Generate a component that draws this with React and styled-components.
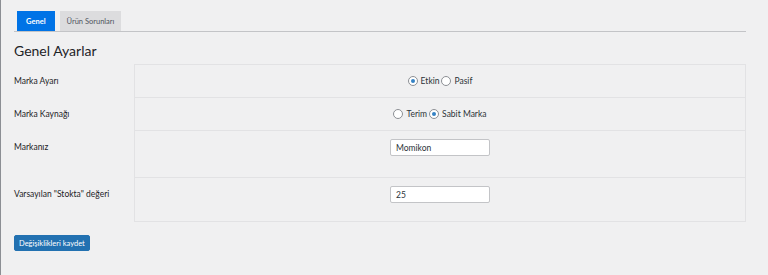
import { styled, createGlobalStyle } from "styled-components";

const Global = createGlobalStyle`
  html, body {
    margin: 0;
    padding: 0;
    background: #f0f0f1;
  }
  body {
    font-family: Lato, "Noto Sans", sans-serif;
    color: #1d2327;
  }
`;

const Page = styled.div`
  width: 768px;
  height: 275px;
  box-sizing: border-box;
  border-left: 1px solid #8c8f94;
  padding: 11px 22px 0 13px;
`;

const TabBar = styled.div`
  display: flex;
  gap: 5px;
  padding-left: 3px;
  border-bottom: 1px solid #c3c4c7;
`;

const Tab = styled.div`
  height: 19px;
  padding: 0 ${(p) => (p.$active ? 8 : 6)}px;
  display: flex;
  align-items: center;
  font-size: 7.5px;
  background: ${(p) => (p.$active ? "#0073e6" : "#dcdcde")};
  color: ${(p) => (p.$active ? "#fff" : "#50575e")};
  font-weight: ${(p) => (p.$active ? 700 : 400)};
  border: 1px solid ${(p) => (p.$active ? "#0073e6" : "#dcdcde")};
  border-bottom: none;
`;

const Heading = styled.h2`
  margin: 10px 0 5px;
  font-size: 14px;
  font-weight: 400;
  color: #1d2327;
`;

const Table = styled.div`
  display: grid;
  grid-template-columns: 120px 1fr;
`;

const Label = styled.div`
  height: ${(p) => p.$h}px;
  display: flex;
  align-items: ${(p) => (p.$top ? "flex-start" : "center")};
  padding-top: ${(p) => (p.$top ? "12px" : "0")};
  box-sizing: border-box;
  font-size: 8.5px;
  color: #1d2327;
`;

const Cell = styled.div`
  height: ${(p) => p.$h}px;
  box-sizing: border-box;
  border-left: 1px solid #e2e2e4;
  border-right: 1px solid #e2e2e4;
  border-top: 1px solid #e2e2e4;
  ${(p) => p.$last && "border-bottom: 1px solid #e2e2e4;"}
  display: flex;
  justify-content: center;
  align-items: ${(p) => (p.$top ? "flex-start" : "center")};
  padding-top: ${(p) => (p.$top ? "8px" : "0")};
  font-size: 8.5px;
  color: #2c3338;
`;

const RadioGroup = styled.div`
  display: flex;
  align-items: center;
  gap: 2px;
`;

const RadioItem = styled.label`
  display: flex;
  align-items: center;
  gap: 3px;
`;

const RadioDot = styled.span`
  width: 8px;
  height: 8px;
  border-radius: 50%;
  border: 1px solid #8c8f94;
  background: #fff;
  display: inline-flex;
  align-items: center;
  justify-content: center;
  &::after {
    content: "";
    width: 4px;
    height: 4px;
    border-radius: 50%;
    background: ${(p) => (p.$on ? "#3582c4" : "transparent")};
  }
`;

const TextInput = styled.div`
  width: 100px;
  height: 17px;
  box-sizing: border-box;
  background: #fff;
  border: 1px solid #c3c4c7;
  border-radius: 2px;
  padding: 0 5px;
  display: flex;
  align-items: center;
  font-size: 8.5px;
  color: #2c3338;
`;

const Button = styled.button`
  display: block;
  margin-top: 13px;
  height: 16px;
  padding: 0 4px;
  background: #2271b1;
  border: 1px solid #2271b1;
  border-radius: 2px;
  color: #fff;
  font-family: inherit;
  font-size: 7.5px;
`;

const Radio = ({ on, children }) => (
  <RadioItem>
    <RadioDot $on={on} />
    {children}
  </RadioItem>
);

const App = () => {
  return (
    <Page>
      <Global />
      <TabBar>
        <Tab $active>Genel</Tab>
        <Tab>Ürün Sorunları</Tab>
      </TabBar>
      <Heading>Genel Ayarlar</Heading>
      <Table>
        <Label $h={33}>Marka Ayarı</Label>
        <Cell $h={33}>
          <RadioGroup>
            <Radio on>Etkin</Radio>
            <Radio>Pasif</Radio>
          </RadioGroup>
        </Cell>
        <Label $h={33}>Marka Kaynağı</Label>
        <Cell $h={33}>
          <RadioGroup>
            <Radio>Terim</Radio>
            <Radio on>Sabit Marka</Radio>
          </RadioGroup>
        </Cell>
        <Label $h={47} $top>Markanız</Label>
        <Cell $h={47} $top>
          <TextInput>Momikon</TextInput>
        </Cell>
        <Label $h={45} $top>Varsayılan "Stokta" değeri</Label>
        <Cell $h={45} $top $last>
          <TextInput>25</TextInput>
        </Cell>
      </Table>
      <Button>Değişiklikleri kaydet</Button>
    </Page>
  );
};

export default App;
